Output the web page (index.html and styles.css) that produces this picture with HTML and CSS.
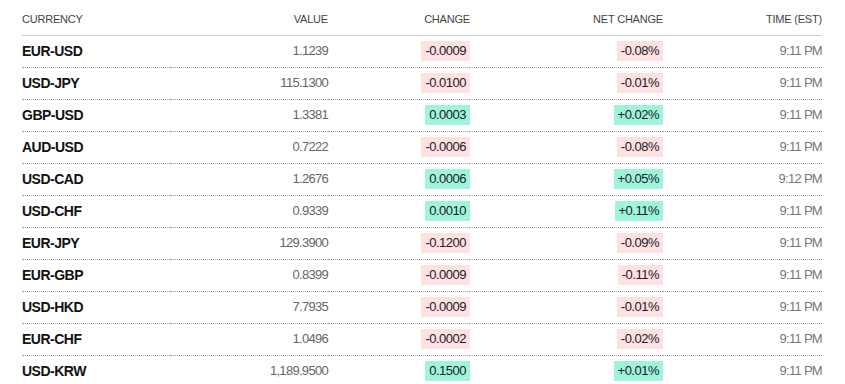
FILE: index.html
```html
<!DOCTYPE html>
<html lang="en">
<head>
    <meta charset="UTF-8">
    <meta name="viewport" content="width=device-width, initial-scale=1.0">
    <title>Currencies</title>
    <link rel="stylesheet" href="styles.css">
</head>
<body>

<table class="quotes">
    <thead>
        <tr>
            <th class="col-name">Currency</th>
            <th class="col-value">Value</th>
            <th class="col-change">Change</th>
            <th class="col-net">Net Change</th>
            <th class="col-time">Time (EST)</th>
        </tr>
    </thead>
    <tbody>
        <tr>
            <td class="name">EUR-USD</td>
            <td class="value">1.1239</td>
            <td><span class="pill down">-0.0009</span></td>
            <td><span class="pill down">-0.08%</span></td>
            <td class="time">9:11 PM</td>
        </tr>
        <tr>
            <td class="name">USD-JPY</td>
            <td class="value">115.1300</td>
            <td><span class="pill down">-0.0100</span></td>
            <td><span class="pill down">-0.01%</span></td>
            <td class="time">9:11 PM</td>
        </tr>
        <tr>
            <td class="name">GBP-USD</td>
            <td class="value">1.3381</td>
            <td><span class="pill up">0.0003</span></td>
            <td><span class="pill up">+0.02%</span></td>
            <td class="time">9:11 PM</td>
        </tr>
        <tr>
            <td class="name">AUD-USD</td>
            <td class="value">0.7222</td>
            <td><span class="pill down">-0.0006</span></td>
            <td><span class="pill down">-0.08%</span></td>
            <td class="time">9:11 PM</td>
        </tr>
        <tr>
            <td class="name">USD-CAD</td>
            <td class="value">1.2676</td>
            <td><span class="pill up">0.0006</span></td>
            <td><span class="pill up">+0.05%</span></td>
            <td class="time">9:12 PM</td>
        </tr>
        <tr>
            <td class="name">USD-CHF</td>
            <td class="value">0.9339</td>
            <td><span class="pill up">0.0010</span></td>
            <td><span class="pill up">+0.11%</span></td>
            <td class="time">9:11 PM</td>
        </tr>
        <tr>
            <td class="name">EUR-JPY</td>
            <td class="value">129.3900</td>
            <td><span class="pill down">-0.1200</span></td>
            <td><span class="pill down">-0.09%</span></td>
            <td class="time">9:11 PM</td>
        </tr>
        <tr>
            <td class="name">EUR-GBP</td>
            <td class="value">0.8399</td>
            <td><span class="pill down">-0.0009</span></td>
            <td><span class="pill down">-0.11%</span></td>
            <td class="time">9:11 PM</td>
        </tr>
        <tr>
            <td class="name">USD-HKD</td>
            <td class="value">7.7935</td>
            <td><span class="pill down">-0.0009</span></td>
            <td><span class="pill down">-0.01%</span></td>
            <td class="time">9:11 PM</td>
        </tr>
        <tr>
            <td class="name">EUR-CHF</td>
            <td class="value">1.0496</td>
            <td><span class="pill down">-0.0002</span></td>
            <td><span class="pill down">-0.02%</span></td>
            <td class="time">9:11 PM</td>
        </tr>
        <tr>
            <td class="name">USD-KRW</td>
            <td class="value">1,189.9500</td>
            <td><span class="pill up">0.1500</span></td>
            <td><span class="pill up">+0.01%</span></td>
            <td class="time">9:11 PM</td>
        </tr>
    </tbody>
</table>

</body>
</html>
```

FILE: styles.css
```css
* {
    margin: 0;
    padding: 0;
    box-sizing: border-box;
}

html, body {
    background: #fff;
    font-family: "Liberation Sans", Arial, sans-serif;
}

body {
    padding: 0 23px 0 22px;
}

.quotes {
    width: 800px;
    border-collapse: collapse;
    table-layout: fixed;
}

.quotes th {
    height: 35px;
    padding: 11px 0 8px;
    font-size: 11px;
    line-height: 14px;
    font-weight: normal;
    text-transform: uppercase;
    letter-spacing: -0.2px;
    color: #444;
    text-align: right;
    border-bottom: 1px solid #ccc;
}

.quotes th.col-name {
    text-align: left;
}

.col-name { width: 148px; }
.col-value { width: 158px; }
.col-change { width: 142px; }
.col-net { width: 193px; }
.col-time { width: 159px; }

.quotes td {
    height: 32px;
    padding: 0;
    font-size: 13px;
    line-height: 16px;
    letter-spacing: -0.5px;
    text-align: right;
    vertical-align: middle;
    border-bottom: 1px dotted #999;
}

.quotes td.name {
    text-align: left;
    font-size: 14px;
    font-weight: bold;
    letter-spacing: -0.5px;
    color: #111;
}

.quotes td.value {
    color: #666;
    letter-spacing: -0.7px;
}

.quotes td.time {
    color: #777;
    letter-spacing: -0.7px;
}

.pill {
    display: inline-block;
    padding: 2px 4px;
    color: #1a1a2a;
}

.down {
    background-color: #ffe1e1;
}

.up {
    background-color: #9ef5db;
}
```
